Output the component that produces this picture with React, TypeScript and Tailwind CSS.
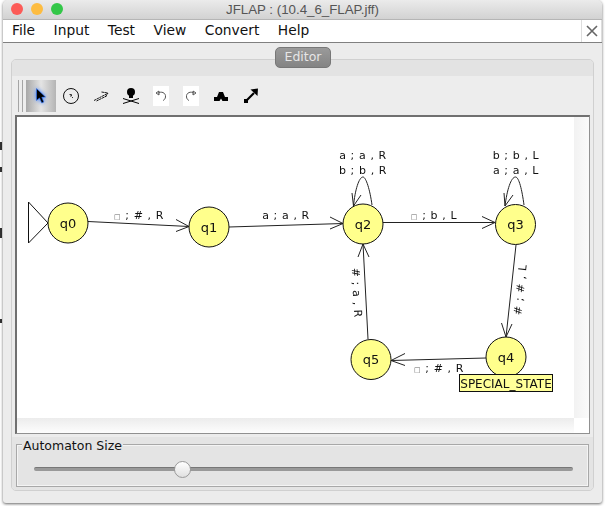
import React from "react";

const menus = ["File", "Input", "Test", "View", "Convert", "Help"];

const states = [
  { name: "q0", x: 68, y: 223 },
  { name: "q1", x: 209, y: 227 },
  { name: "q2", x: 363, y: 224 },
  { name: "q3", x: 515.5, y: 224.5 },
  { name: "q4", x: 506, y: 357 },
  { name: "q5", x: 371, y: 359.5 },
];

const edges = [
  "M88 221.5 L189 226.5 M176 219.5 L189 226.5 L176 231.5",
  "M229 227 L343 223.5 M330 217 L343 223.5 L330 229",
  "M383 222.5 L495 222.5 M482 216.5 L495 222.5 L482 228.5",
  "M516 245 L506 337 M501.5 323 L506 337 L512 324",
  "M486 358 L391 360.5 M405 353.5 L391 360.5 L405 365.5",
  "M368 339 L363 244 M358 257 L363 244 L369 257",
  "M372 205 C 370 190, 366 177, 363 177 C 359 177, 355 190, 353.5 206 M352 193 L353.5 206 L361 195",
  "M524 205 C 522 190, 519 177, 515.5 177 C 511 177, 507 190, 505 206 M504 193 L505 206 L513 195",
];

function Label({ x, y, children, rotate }: { x: number; y: number; children: React.ReactNode; rotate?: number }) {
  return (
    <text
      x={x}
      y={y}
      textAnchor="middle"
      fontSize="11"
      fill="#111"
      letterSpacing="0.6"
      transform={rotate ? `rotate(${rotate} ${x} ${y})` : undefined}
    >
      {children}
    </text>
  );
}

function Blank() {
  return <tspan fontSize="7" fill="#666">□</tspan>;
}

function Diagram() {
  return (
    <svg className="w-[557px] h-[301px] block will-change-transform" viewBox="17 117 557 301" style={{ fontFamily: '"DejaVu Sans", sans-serif' }}>
      <path d="M28.5 202 L48 223 L28.5 243 Z" fill="white" stroke="#111" strokeWidth="1" />
      <path d={edges.join(" ")} fill="none" stroke="#222" strokeWidth="1" />
      {states.map((s) => (
        <g key={s.name}>
          <circle cx={s.x} cy={s.y} r="20" fill="#ffff8c" stroke="#111" strokeWidth="1" />
          <text x={s.x} y={s.y + 4.5} textAnchor="middle" fontSize="13" fill="#111">
            {s.name}
          </text>
        </g>
      ))}
      <Label x={139} y={219}><Blank /> ; # , R</Label>
      <Label x={286} y={219}>a ; a , R</Label>
      <Label x={434} y={219}><Blank /> ; b , L</Label>
      <Label x={363} y={159}>a ; a , R</Label>
      <Label x={363} y={174}>b ; b , R</Label>
      <Label x={516} y={159}>b ; b , L</Label>
      <Label x={516} y={174}>a ; a , L</Label>
      <Label x={353} y={293} rotate={87}># ; a , R</Label>
      <Label x={524} y={290} rotate={-84}># ; # , L</Label>
      <Label x={439} y={372}><Blank /> ; # , R</Label>
      <rect x="459.5" y="374.5" width="93" height="17" fill="#ffff99" stroke="#111" />
      <text x="506" y="387.5" textAnchor="middle" fontSize="12" fill="#111">SPECIAL_STATE</text>
    </svg>
  );
}

function ToolIcon({ children }: { children: React.ReactNode }) {
  return <div className="w-[30px] h-[32px] flex items-center justify-center">{children}</div>;
}

function Toolbar() {
  return (
    <div className="h-[39px] shrink-0 flex items-center pl-[6px] bg-[#ededed]">
      <div className="w-[5px] h-[32px] border-x border-[#a5a5a5] mr-[3px]" />
      <div className="w-[30px] h-[32px] flex items-center justify-center bg-gradient-to-r from-[#a8a8a8] via-[#e4e4e4] to-[#b4b4b4]">
        <svg width="12" height="16" viewBox="0 0 12 16" className="drop-shadow-[0_0_2px_#2f76ff]">
          <path d="M1.5 0.5 L1.5 12.5 L4.5 10 L6.8 15 L8.8 14 L6.8 9.3 L10.5 9 Z" fill="#000" stroke="#2f76ff" strokeWidth="0.6" />
        </svg>
      </div>
      <ToolIcon>
        <svg width="18" height="18" viewBox="0 0 18 18">
          <circle cx="9" cy="9" r="7.5" fill="none" stroke="#111" />
          <path d="M7.5 7.5 h2 v1.5 h-1.5 M10 10.5 h1" fill="none" stroke="#333" />
        </svg>
      </ToolIcon>
      <ToolIcon>
        <svg width="16" height="12" viewBox="0 0 16 12">
          <path d="M1 10.5 L14.5 3.5 M3.5 11 L13.5 6 M8.5 2 L15 3 L12 7.5" fill="none" stroke="#000" strokeWidth="0.9" strokeDasharray="2.5 0.5" />
        </svg>
      </ToolIcon>
      <ToolIcon>
        <svg width="18" height="18" viewBox="0 0 18 18">
          <circle cx="9" cy="5" r="4" fill="#000" />
          <rect x="7" y="8" width="4" height="3" fill="#000" />
          <path d="M1 11.5 L17 16.5 M17 11.5 L1 16.5" stroke="#000" strokeWidth="1" />
        </svg>
      </ToolIcon>
      <ToolIcon>
        <div className="w-[16px] h-[20px] bg-white flex items-center justify-center">
          <svg width="12" height="12" viewBox="0 0 12 12">
            <path d="M3 3.2 C 6 1, 11 2.5, 10.5 7 C 10.3 9, 9 10, 8 10.5 M1 3 L4 1 L4 5 Z" fill="none" stroke="#555" strokeWidth="1" />
          </svg>
        </div>
      </ToolIcon>
      <ToolIcon>
        <div className="w-[16px] h-[20px] bg-white flex items-center justify-center">
          <svg width="12" height="12" viewBox="0 0 12 12">
            <path d="M9 3.2 C 6 1, 1 2.5, 1.5 7 C 1.7 9, 3 10, 4 10.5 M11 3 L8 1 L8 5 Z" fill="none" stroke="#555" strokeWidth="1" />
          </svg>
        </div>
      </ToolIcon>
      <ToolIcon>
        <svg width="14" height="10" viewBox="0 0 14 10">
          <path d="M0 10 L0 6 L3 6 L5 1 L9 1 L11 6 L14 6 L14 10 L8.5 10 L7 7.5 L5.5 10 Z" fill="#000" />
        </svg>
      </ToolIcon>
      <ToolIcon>
        <svg width="16" height="16" viewBox="0 0 16 16">
          <path d="M3 13 L11 5" stroke="#000" strokeWidth="2.2" />
          <path d="M7.5 1.5 L15 0.5 L14.5 8 Z" fill="#000" />
          <rect x="1" y="11" width="4" height="4" fill="#000" />
        </svg>
      </ToolIcon>
    </div>
  );
}

export default function App() {
  return (
    <div className="relative w-[606px] h-[506px] bg-white overflow-hidden pl-[3px] pr-[4px] pb-[3px]" style={{ fontFamily: '"DejaVu Sans", sans-serif' }}>
      {/* bits of the window behind, showing at the left edge */}
      <div className="absolute left-0 top-[142px] w-[2px] h-[8px] bg-[#333]" />
      <div className="absolute left-0 top-[167px] w-[2px] h-[5px] bg-[#333]" />
      <div className="absolute left-0 top-[228px] w-[2px] h-[10px] bg-[#333]" />
      <div className="absolute left-0 top-[319px] w-[2px] h-[4px] bg-[#333]" />
      <div className="relative h-full flex flex-col bg-[#ececec] rounded-t-[5px] rounded-b-[3px] shadow-[0_1px_3px_rgba(0,0,0,0.6)]">
        <div className="relative h-[20px] shrink-0 flex items-center justify-center rounded-t-[5px] bg-gradient-to-b from-[#ebebeb] to-[#d2d2d2] border-b border-[#b5b5b5]">
          <div className="absolute left-[8px] top-[3px] flex gap-[8px]">
            <div className="w-[12px] h-[12px] rounded-full bg-[#fc5b57]" />
            <div className="w-[12px] h-[12px] rounded-full bg-[#fdbc40]" />
            <div className="w-[12px] h-[12px] rounded-full bg-[#33c748]" />
          </div>
          <span className="text-[13.3px] text-[#555] leading-none" style={{ fontFamily: '"Liberation Sans", sans-serif' }}>
            JFLAP : (10.4_6_FLAP.jff)
          </span>
        </div>
        <div className="h-[23px] shrink-0 flex items-center justify-between bg-white border-b border-[#808080]">
          <div className="flex pl-[9px] gap-[18.5px] text-[13.8px] text-[#111] leading-none">
            {menus.map((m) => (
              <span key={m}>{m}</span>
            ))}
          </div>
          <div className="w-[21px] h-[22px] flex items-center justify-center border-x border-[#ddd]">
            <svg width="12" height="12" viewBox="0 0 12 12">
              <path d="M1 1 L11 11 M11 1 L1 11" stroke="#666" strokeWidth="1.6" />
            </svg>
          </div>
        </div>
        <div className="relative flex-1 px-[8px] pt-[16px] pb-[12px] flex flex-col min-h-0">
          <div className="absolute left-[272px] top-[4px] z-10 w-[56px] h-[21px] rounded-[5px] bg-gradient-to-b from-[#9a9a9a] to-[#848484] border border-[#777] flex items-center justify-center text-[12.5px] text-[#e6e6e6]">
            Editor
          </div>
          <div className="flex-1 flex flex-col border border-[#d0d0d0] rounded-[5px] min-h-0 overflow-hidden">
            <div className="h-[16px] bg-[#e3e3e3] shrink-0" />
            <Toolbar />
            <div className="mx-[3px] h-[319px] shrink-0 bg-white border-t-2 border-l-2 border-[#707070] border-r border-b border-r-[#909090] border-b-[#909090] flex flex-col">
              <div className="flex flex-1 min-h-0">
                <div className="flex-1 min-w-0 bg-white">
                  <Diagram />
                </div>
                <div className="w-[15px] bg-gradient-to-r from-[#f2f2f2] to-[#fafafa]" />
              </div>
              <div className="h-[15px] shrink-0 flex">
                <div className="flex-1 bg-gradient-to-b from-[#ececec] to-[#fdfdfd]" />
                <div className="w-[15px] bg-white" />
              </div>
            </div>
            <div className="relative flex-1 bg-[#e4e4e4] mt-[3px] px-[4px] pt-[7px] pb-[3px] flex flex-col">
              <div className="flex-1 border border-[#a8a8a8] shadow-[inset_0_0_0_1px_#f4f4f4] flex items-center pl-[17px] pr-[15px] pt-[7px]">
                <div className="relative w-full h-[4px] rounded-full bg-[#999] border-t border-[#777]">
                  <div className="absolute left-[140px] top-[-7px] w-[17px] h-[17px] rounded-full bg-gradient-to-b from-white to-[#e0e0e0] border border-[#9a9a9a]" />
                </div>
              </div>
              <span className="absolute left-[10px] top-[1px] bg-[#e4e4e4] px-[1px] text-[12.5px] leading-[15px] text-[#111]">
                Automaton Size
              </span>
            </div>
          </div>
        </div>
      </div>
    </div>
  );
}
